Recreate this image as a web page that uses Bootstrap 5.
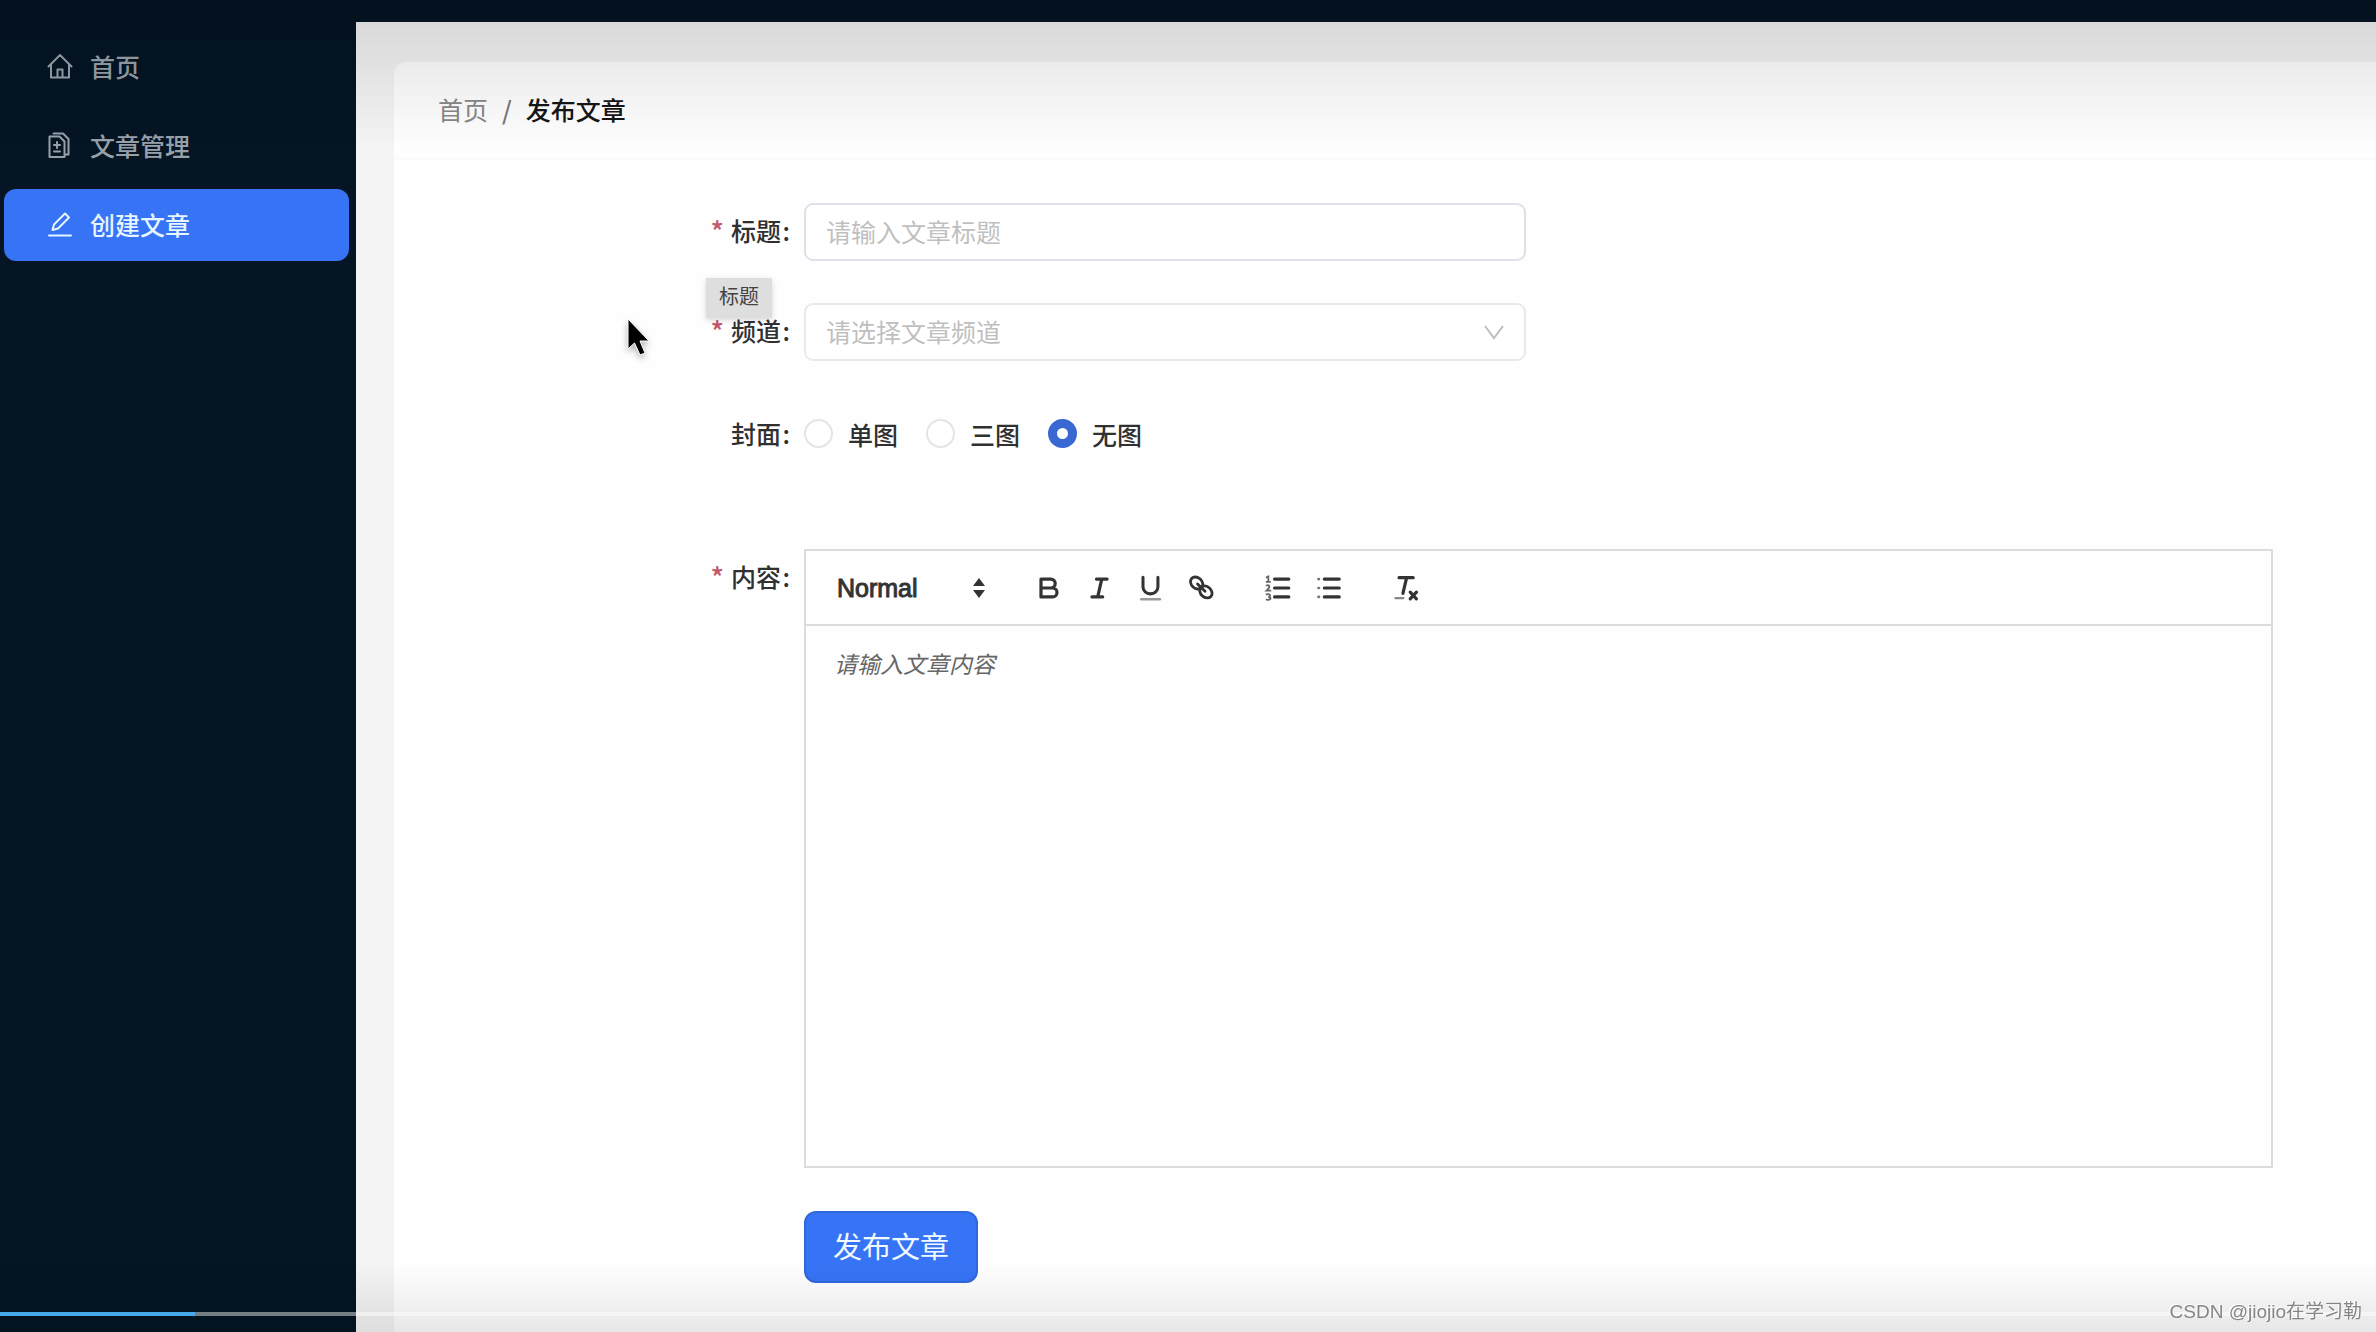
<!DOCTYPE html>
<html lang="zh-CN">
<head>
<meta charset="utf-8">
<meta name="viewport" content="width=device-width, initial-scale=1">
<title>发布文章</title>
<link href="https://cdn.jsdelivr.net/npm/bootstrap@5.3.0/dist/css/bootstrap.min.css" rel="stylesheet">
<style>
  :root { --brand: #3773f5; --navy: #051524; }
  body { font-family: "Noto Sans CJK SC", "Liberation Sans", sans-serif; font-size: 25px; line-height: 36px; color: #333; background: var(--navy); }
  .topbar { height: 22px; background: var(--navy); }
  .side { width: 356px; padding: 9px 7px 0 4px; background: var(--navy); }
  .side-menu { gap: 7px; }
  .side-link { height: 72px; padding: 0 43px 3px 43px; gap: 17px; border-radius: 12px; color: #98a1aa; font-weight: 500; text-decoration: none; }
  .side-link svg { width: 26px; height: 26px; }
  .side-link.active { background: var(--brand); color: #e6f5ff; }
  .content { background: #f4f4f4; padding: 40px 0 0 38px; }
  .panel { background: #fefefe; border-radius: 12px 0 0 0; }
  .panel-head { height: 98px; padding: 0 44px 3px 44px; border-bottom: 2px solid #fafbfd; }
  .crumbs { --bs-breadcrumb-item-padding-x: 14px; --bs-breadcrumb-divider-color: #777; font-size: 25px; }
  .crumbs a { color: #888; text-decoration: none; }
  .crumbs .active { color: #161616; font-weight: 500; }
  .publish-form { padding: 43px 103px 46px 0; }
  .field-label { width: 410px; padding: 9px 14px 10px 0; gap: 7px; color: #303030; font-weight: 500; }
  .field-label .req { color: #c4586c; font-size: 28px; }
  .mid-control { width: 722px; max-width: 100%; height: 58px; font-size: 25px; line-height: 36px; padding: 7px 20px 9px 20px; border: 2px solid #dfe0ea; border-radius: 9px; background-color: #fff; color: #303030; }
  .mid-control::placeholder { color: #bfbfbf; opacity: 1; }
  .channel { appearance: none; width: 100%; border-color: #e9e9e9; color: #bfbfbf; background-image: none; }
  .channel-wrap { width: 722px; max-width: 100%; }
  .chevron { right: 20px; top: 18px; width: 24px; height: 22px; color: #bdbdbd; pointer-events: none; }
  .hint { left: 312px; top: -25px; padding: 0 13px 4px 13px; font-size: 20px; color: #444; background: #dedede; box-shadow: 0 2px 6px rgba(0,0,0,.16); }
  .gap-row { margin-bottom: 42px; }
  .cover-row { padding-top: 3px; margin-bottom: 88px; }
  .cover-options { gap: 28px; }
  .cover-options label { gap: 15px; color: #303030; font-weight: 500; }
  .cover-options input { width: 29px; height: 29px; margin: 0; border: 2px solid #e4e4e4; }
  .cover-options input:checked { border: 9px solid #3968d2; background: #fff; }
  .editor { border: 2px solid #dcdcdc; background: #fefefe; }
  .editor-tools { height: 75px; padding: 0 31px; border-bottom: 2px solid #dcdcdc; color: #333; }
  .style-select { appearance: none; border: 0; background: transparent; padding: 0; width: 135px; font-family: "Liberation Sans", sans-serif; font-size: 25px; color: #333; -webkit-text-stroke: 1px #333; }
  .tool-arrows { width: 14px; height: 22px; pointer-events: none; }
  .tool-btn { border: 0; background: transparent; padding: 0; width: 51px; height: 40px; color: #333; }
  .tool-btn svg { width: 32px; height: 32px; display: block; margin: auto; }
  .tool-group { margin-left: 37px; }
  .tool-group + .tool-group { margin-left: 26px; }
  .editor-body { display: block; width: 100%; height: 540px; padding: 19px 28px; border: 0; outline: 0; resize: none; background: transparent; font-size: 23px; line-height: 36px; }
  .editor-body::placeholder { color: #666; opacity: 1; font-style: italic; }
  .submit-btn { height: 72px; padding: 0 27px 2px 27px; border: 2px solid #3068dc; border-radius: 12px; background: var(--brand); color: #f0faff; font-size: 29px; }
  .submit-row { margin-top: 43px; padding-left: 410px; }
  .shade-top, .shade-bottom { left: 0; right: 0; pointer-events: none; }
  .shade-top { top: 0; height: 148px; background: linear-gradient(rgba(0,0,0,.13), rgba(0,0,0,0)); }
  .shade-bottom { bottom: 0; height: 68px; background: linear-gradient(rgba(0,0,0,0), rgba(0,0,0,.09)); }
  .play-bar { left: 0; right: 0; bottom: 16px; height: 4px; border-radius: 0; background: rgba(255,255,255,.45); }
  .play-bar .progress-bar { background: #48a9ea; }
  .credit { right: 14px; bottom: 5px; font-family: "Liberation Sans", "Noto Sans CJK SC", sans-serif; font-size: 19px; line-height: 30px; color: #858585; text-shadow: -1px -1px 0 #fff; }
  .pointer { left: 626px; top: 314px; width: 26px; height: 46px; filter: drop-shadow(0 3px 3px rgba(0,0,0,.3)); }
</style>
<script src="https://cdn.jsdelivr.net/npm/bootstrap@5.3.0/dist/js/bootstrap.bundle.min.js"></script>
</head>
<body>
<div class="d-flex flex-column min-vh-100">
  <header class="topbar flex-shrink-0"></header>
  <div class="d-flex flex-grow-1">
    <aside class="side flex-shrink-0">
      <nav class="side-menu d-flex flex-column">
        <a href="#" class="side-link d-flex align-items-center">
          <svg viewBox="0 0 26 26" fill="none" stroke="currentColor" stroke-width="2" stroke-linejoin="round" stroke-linecap="round"><path d="M1.500 13.500 13 2l11.500 11.500M4 11.500V24.500H22V11.500M10.500 24v-7.500h5V24"/></svg>
          <span>首页</span>
        </a>
        <a href="#" class="side-link d-flex align-items-center">
          <svg viewBox="0 0 26 26" fill="none" stroke="currentColor" stroke-width="2" stroke-linejoin="round" stroke-linecap="round"><path d="M2.500 4.500H12.500L17.500 9.500V25H2.500ZM6.500 1.500H16L21.500 7V22.500H19M10 10v6M7 13h6M7 19.500h6"/></svg>
          <span>文章管理</span>
        </a>
        <a href="#" class="side-link active d-flex align-items-center" aria-current="page">
          <svg viewBox="0 0 26 26" fill="none" stroke="currentColor" stroke-width="2" stroke-linejoin="round" stroke-linecap="round"><path d="M5.500 19 7 13.500 18 2.500 22 6.500 11 17.500ZM2 24.500H24"/></svg>
          <span>创建文章</span>
        </a>
      </nav>
    </aside>
    <main class="content flex-grow-1 d-flex flex-column">
      <section class="panel flex-grow-1">
        <nav class="panel-head d-flex align-items-center" aria-label="breadcrumb">
          <ol class="breadcrumb crumbs mb-0">
            <li class="breadcrumb-item"><a href="#">首页</a></li>
            <li class="breadcrumb-item active" aria-current="page">发布文章</li>
          </ol>
        </nav>
        <form class="publish-form">
          <div class="d-flex gap-row">
            <label class="field-label d-flex justify-content-end flex-shrink-0" for="title"><span class="req">*</span><span>标题&#8202;:</span></label>
            <input class="form-control mid-control" id="title" type="text" placeholder="请输入文章标题">
          </div>
          <div class="d-flex gap-row position-relative">
            <label class="field-label d-flex justify-content-end flex-shrink-0" for="channel"><span class="req">*</span><span>频道&#8202;:</span></label>
            <div class="channel-wrap position-relative">
              <select class="form-select mid-control channel" id="channel"><option>请选择文章频道</option></select>
              <svg class="chevron position-absolute" viewBox="0 0 24 22" fill="none" stroke="currentColor" stroke-width="2"><path d="M3 5 12 17 21 5"/></svg>
            </div>
            <div class="hint position-absolute" role="tooltip">标题</div>
          </div>
          <div class="d-flex cover-row" role="radiogroup" aria-labelledby="cover-label">
            <div class="field-label d-flex justify-content-end flex-shrink-0" id="cover-label"><span>封面&#8202;:</span></div>
            <div class="cover-options d-flex align-items-center">
              <label class="d-flex align-items-center"><input class="form-check-input" type="radio" name="cover">单图</label>
              <label class="d-flex align-items-center"><input class="form-check-input" type="radio" name="cover">三图</label>
              <label class="d-flex align-items-center"><input class="form-check-input" type="radio" name="cover" checked>无图</label>
            </div>
          </div>
          <div class="d-flex align-items-start">
            <label class="field-label d-flex justify-content-end flex-shrink-0" for="body-text"><span class="req">*</span><span>内容&#8202;:</span></label>
            <div class="editor flex-grow-1">
              <div class="editor-tools d-flex align-items-center">
                <select class="style-select" aria-label="段落样式"><option>Normal</option></select>
                <svg class="tool-arrows" viewBox="0 0 14 22" fill="currentColor"><path d="M7 1 13 9H1ZM7 21 1 13H13Z"/></svg>
                <div class="tool-group d-flex">
                  <button class="tool-btn" type="button" aria-label="加粗"><svg viewBox="0 0 18 18" fill="none" stroke="currentColor" stroke-width="1.800" stroke-linejoin="round"><path d="M4.500 4h5.500a2.500 2.500 0 0 1 0 5H4.500ZM4.500 9h6.500a2.500 2.500 0 0 1 0 5H4.500Z"/></svg></button>
                  <button class="tool-btn" type="button" aria-label="斜体"><svg viewBox="0 0 18 18" fill="none" stroke="currentColor" stroke-width="1.800" stroke-linecap="round"><path d="M7 4h6M4.500 14h6M10 4 7.700 14"/></svg></button>
                  <button class="tool-btn" type="button" aria-label="下划线"><svg viewBox="0 0 18 18" fill="none" stroke="currentColor" stroke-width="1.700" stroke-linecap="round"><path d="M4.500 3v5.500a4.200 3.800 0 0 0 8.400 0V3"/><path d="M3.500 15.300h10.500" stroke="#999" stroke-width="1.400"/></svg></button>
                  <button class="tool-btn" type="button" aria-label="链接"><svg viewBox="0 0 18 18" fill="none" stroke="currentColor" stroke-width="1.600" stroke-linecap="round"><ellipse cx="6" cy="6.200" rx="3" ry="3.800" transform="rotate(-48 6 6.200)"/><ellipse cx="11.200" cy="11.200" rx="3" ry="3.800" transform="rotate(-48 11.200 11.200)"/><path d="M6.500 6.700 10.700 10.800"/></svg></button>
                </div>
                <div class="tool-group d-flex">
                  <button class="tool-btn" type="button" aria-label="有序列表"><svg viewBox="0 0 18 18" fill="none" stroke="currentColor" stroke-width="1.800" stroke-linecap="round"><path d="M6.500 4H14.500M6.500 9H14.500M6.500 14H14.500"/><path d="M2 3 3 2.500v3M2 5.500h2M2 7.600c2-.6 2.300.8 0 2.900h2.200M2 12.600c2.500-.5 2.500 1.200 1 1.500 2 .2 1.500 2-1 1.400" stroke="#666" stroke-width="1"/></svg></button>
                  <button class="tool-btn" type="button" aria-label="无序列表"><svg viewBox="0 0 18 18" fill="none" stroke="currentColor" stroke-width="1.800" stroke-linecap="round"><path d="M5.800 4H14.200M5.800 9H14.200M5.800 14H14.200"/><path d="M2.500 4h.3M2.500 9h.3M2.500 14h.3" stroke="#777" stroke-width="1.500"/></svg></button>
                </div>
                <div class="tool-group d-flex">
                  <button class="tool-btn" type="button" aria-label="清除格式"><svg viewBox="0 0 18 18" fill="none" stroke="currentColor" stroke-width="1.800" stroke-linecap="round"><path d="M4.500 3.200h8M8.800 3.200 6.700 12M10.800 11.300l3.500 3.800M14.300 11.300l-3.500 3.800"/><path d="M2.500 14.700h4.500" stroke-width="1.200" stroke="#888"/></svg></button>
                </div>
              </div>
              <textarea class="editor-body" id="body-text" placeholder="请输入文章内容"></textarea>
            </div>
          </div>
          <div class="submit-row">
            <button class="btn submit-btn" type="submit">发布文章</button>
          </div>
        </form>
      </section>
    </main>
  </div>
</div>
<div class="shade-top position-fixed"></div>
<div class="shade-bottom position-fixed"></div>
<div class="progress play-bar position-fixed" role="progressbar" aria-label="播放进度" aria-valuenow="8" aria-valuemin="0" aria-valuemax="100"><div class="progress-bar" style="width: 8.200%"></div></div>
<div class="credit position-fixed">CSDN @jiojio在学习勒</div>
<svg class="pointer position-absolute" viewBox="0 0 26 46"><path d="M2 5V35L8.500 29 14 41 19 39 14 27H23Z" fill="#000" stroke="#fff" stroke-width="1"/></svg>
</body>
</html>
